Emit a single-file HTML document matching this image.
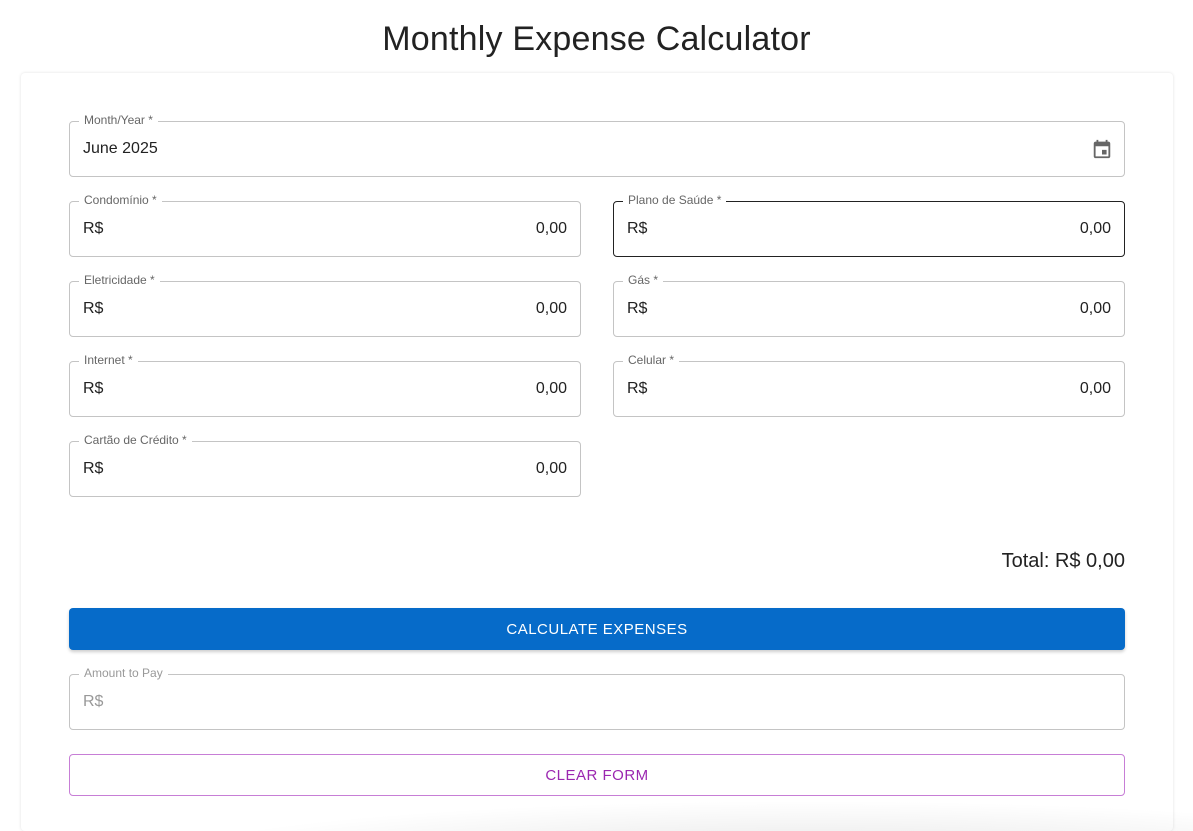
<!DOCTYPE html>
<html><head><meta charset="utf-8"><style>
*{box-sizing:border-box;margin:0;padding:0}
html,body{width:1193px;height:831px;overflow:hidden}
body{background:#fff;font-family:"Liberation Sans",sans-serif;position:relative;color:#222}
h1{position:absolute;top:20px;left:0;width:1193px;text-align:center;font-weight:400;font-size:34px;color:#222;letter-spacing:.2px}
.card{position:absolute;left:21px;top:73px;width:1152px;height:758px;border-radius:4px;box-shadow:0 0 3px rgba(0,0,0,.12);background:#fff}
.f{position:absolute;height:56px;border:1px solid #c4c4c4;border-radius:4px}
.f.dark{border-color:#222}
.lab{position:absolute;top:-9px;left:9px;background:#fff;padding:0 5px;font-size:12px;color:#666;line-height:14px}
.pre{position:absolute;left:13px;top:18px;font-size:16px;color:#222}
.val{position:absolute;right:13px;top:18px;font-size:16px;color:#222}
.L{left:69px;width:512px}.R{left:613px;width:512px}.W{left:69px;width:1056px}
.btn{position:absolute;left:69px;width:1056px;height:42px;top:608px;background:#066bc9;color:#fff;border-radius:4px;text-align:center;line-height:43px;font-size:15px;letter-spacing:.5px;box-shadow:0 2px 3px rgba(0,0,0,.2)}
.clr{position:absolute;left:69px;width:1056px;height:42px;top:754px;border:1px solid #c77ed6;color:#9b27b0;border-radius:4px;text-align:center;line-height:41px;font-size:15px;letter-spacing:.5px}
.tot{position:absolute;right:68px;top:550px;font-size:20px;color:#222}
.shade{position:absolute;left:150px;top:800px;width:1100px;height:60px;background:radial-gradient(ellipse at 60% 100%,rgba(0,0,0,.1),rgba(0,0,0,0) 70%)}
</style></head><body>
<h1>Monthly Expense Calculator</h1>
<div class="card"></div>
<div class="shade"></div>
<div class="f W" style="top:121px"><span class="lab">Month/Year *</span><span class="pre">June 2025</span>
<svg style="position:absolute;right:11px;top:16px" width="22" height="22" viewBox="0 0 24 24"><path fill="#666" d="M19 4h-1V2h-2v2H8V2H6v2H5c-1.1 0-2 .9-2 2v14c0 1.1.9 2 2 2h14c1.1 0 2-.9 2-2V6c0-1.1-.9-2-2-2zm0 16H5V9h14v11zM12 13h5v5h-5z"/></svg></div>
<div class="f L" style="top:201px"><span class="lab">Condomínio *</span><span class="pre">R$</span><span class="val">0,00</span></div>
<div class="f R dark" style="top:201px"><span class="lab">Plano de Saúde *</span><span class="pre">R$</span><span class="val">0,00</span></div>
<div class="f L" style="top:281px"><span class="lab">Eletricidade *</span><span class="pre">R$</span><span class="val">0,00</span></div>
<div class="f R" style="top:281px"><span class="lab">Gás *</span><span class="pre">R$</span><span class="val">0,00</span></div>
<div class="f L" style="top:361px"><span class="lab">Internet *</span><span class="pre">R$</span><span class="val">0,00</span></div>
<div class="f R" style="top:361px"><span class="lab">Celular *</span><span class="pre">R$</span><span class="val">0,00</span></div>
<div class="f L" style="top:441px"><span class="lab">Cartão de Crédito *</span><span class="pre">R$</span><span class="val">0,00</span></div>
<div class="tot">Total: R$ 0,00</div>
<div class="btn">CALCULATE EXPENSES</div>
<div class="f W" style="top:674px"><span class="lab" style="color:#999">Amount to Pay</span><span class="pre" style="color:#999">R$</span></div>
<div class="clr">CLEAR FORM</div>
</body></html>
